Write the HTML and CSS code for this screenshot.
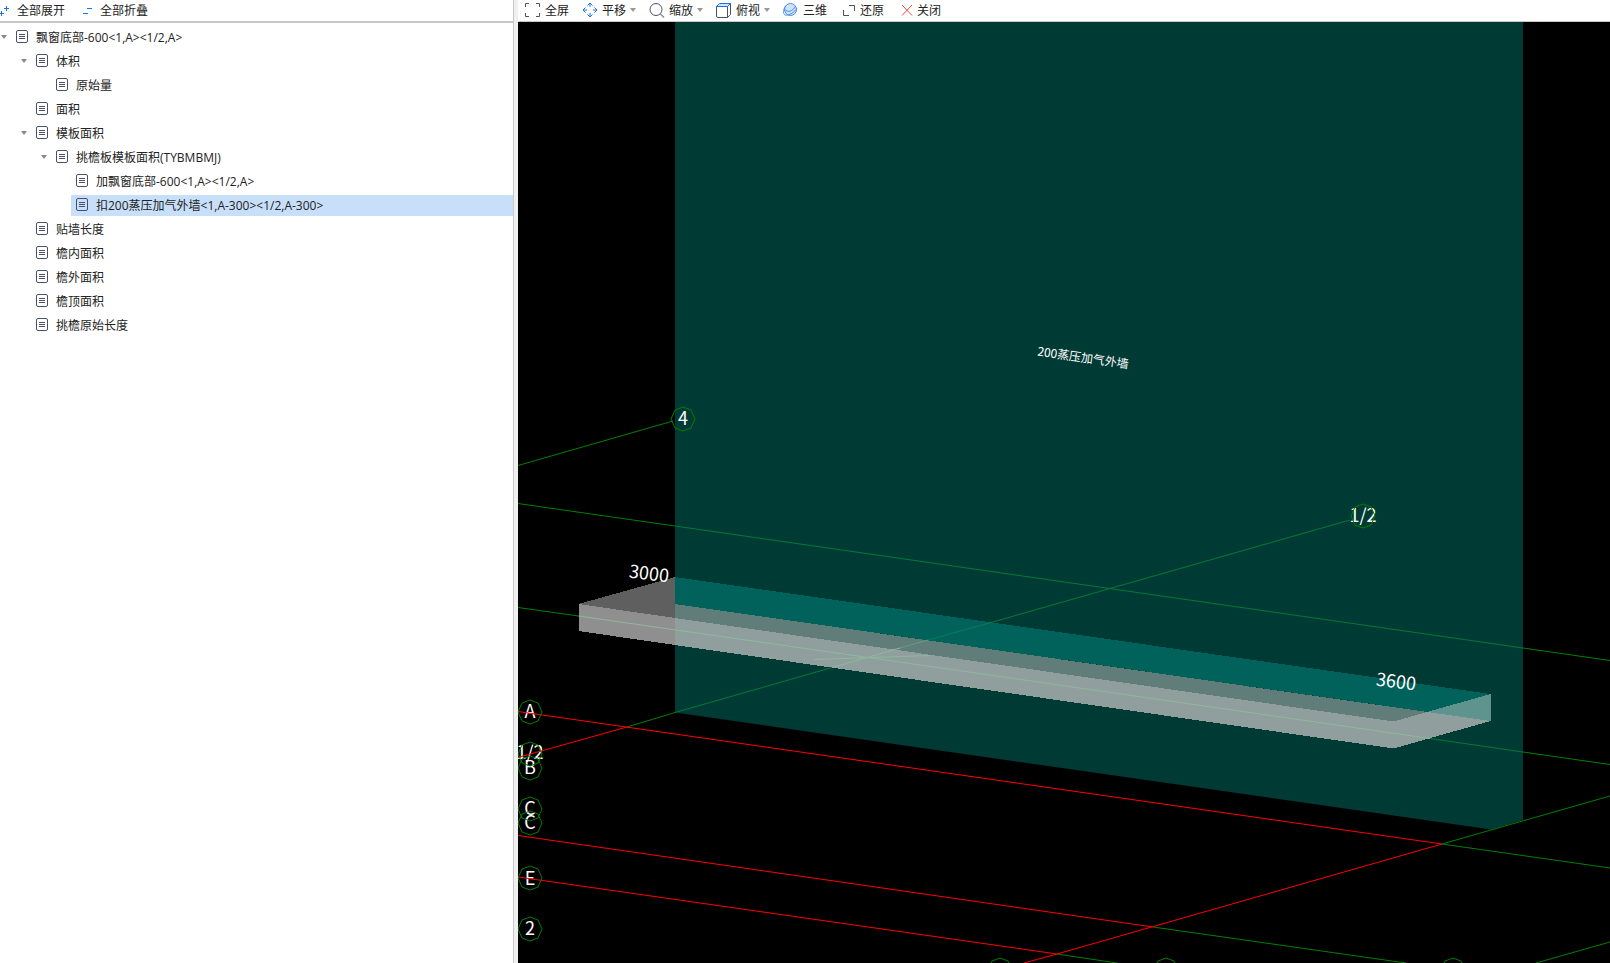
FILE: index.html
```html
<!DOCTYPE html>
<html lang="zh-CN">
<head>
    <meta charset="UTF-8">
    <meta name="viewport" content="width=device-width, initial-scale=1.0">
    <title>三维扣减</title>
    <link rel="stylesheet" href="styles.css">
</head>
<body>
    <!-- shared icons -->
    <svg class="defs" aria-hidden="true">
        <symbol id="doc" viewBox="0 0 12 13">
            <rect x="0.5" y="0.5" width="11" height="12" rx="1.5" fill="none" stroke="#4a5068"/>
            <path d="M3 4.5h6M3 6.5h6M3 8.5h6" fill="none" stroke="#4a5068"/>
        </symbol>
        <symbol id="bubble" viewBox="-13 -13 26 26">
            <path d="M0-12L8-9L12 0L8 9L0 12L-8 9L-12 0L-8-9Z" fill="none" stroke="#008000"/>
        </symbol>
    </svg>

    <div class="app">
        <aside class="side">
            <div class="toolbar side-bar">
                <button type="button">
                    <svg width="10" height="16" viewBox="0 0 10 16"><path d="M0 11.500h4M1.500 9v5M4 6.500h5M6.500 4v5" fill="none" stroke="#1a73e8"/></svg>
                    全部展开
                </button>
                <button type="button">
                    <svg width="10" height="16" viewBox="0 0 10 16"><path d="M0 11.500h5M4 6.500h5" fill="none" stroke="#1a73e8"/></svg>
                    全部折叠
                </button>
            </div>
            <ul class="tree">
                <li>
                    <div class="row"><button type="button" class="toggle" aria-label="折叠"></button><span class="node"><svg class="doc"><use href="#doc"/></svg>飘窗底部-600&lt;1,A&gt;&lt;1/2,A&gt;</span></div>
                    <ul>
                        <li>
                            <div class="row"><button type="button" class="toggle" aria-label="折叠"></button><span class="node"><svg class="doc"><use href="#doc"/></svg>体积</span></div>
                            <ul>
                                <li><div class="row"><span class="node"><svg class="doc"><use href="#doc"/></svg>原始量</span></div></li>
                            </ul>
                        </li>
                        <li><div class="row"><span class="node"><svg class="doc"><use href="#doc"/></svg>面积</span></div></li>
                        <li>
                            <div class="row"><button type="button" class="toggle" aria-label="折叠"></button><span class="node"><svg class="doc"><use href="#doc"/></svg>模板面积</span></div>
                            <ul>
                                <li>
                                    <div class="row"><button type="button" class="toggle" aria-label="折叠"></button><span class="node"><svg class="doc"><use href="#doc"/></svg>挑檐板模板面积(TYBMBMJ)</span></div>
                                    <ul>
                                        <li><div class="row"><span class="node"><svg class="doc"><use href="#doc"/></svg>加飘窗底部-600&lt;1,A&gt;&lt;1/2,A&gt;</span></div></li>
                                        <li><div class="row"><span class="node selected"><svg class="doc"><use href="#doc"/></svg>扣200蒸压加气外墙&lt;1,A-300&gt;&lt;1/2,A-300&gt;</span></div></li>
                                    </ul>
                                </li>
                            </ul>
                        </li>
                        <li><div class="row"><span class="node"><svg class="doc"><use href="#doc"/></svg>贴墙长度</span></div></li>
                        <li><div class="row"><span class="node"><svg class="doc"><use href="#doc"/></svg>檐内面积</span></div></li>
                        <li><div class="row"><span class="node"><svg class="doc"><use href="#doc"/></svg>檐外面积</span></div></li>
                        <li><div class="row"><span class="node"><svg class="doc"><use href="#doc"/></svg>檐顶面积</span></div></li>
                        <li><div class="row"><span class="node"><svg class="doc"><use href="#doc"/></svg>挑檐原始长度</span></div></li>
                    </ul>
                </li>
            </ul>
        </aside>

        <main class="view">
            <div class="toolbar view-bar">
                <button type="button">
                    <svg width="16" height="16" viewBox="0 0 16 16"><path d="M0.500 5V1.500H4M11 1.500h3.500V5M14.500 11v3.500H11M4 14.500H0.500V11" fill="none" stroke="#4a5068"/></svg>
                    全屏
                </button>
                <button type="button">
                    <svg width="16" height="16" viewBox="0 0 16 16"><path d="M5.500 3.500L8 1l2.500 2.500M5.500 12.500L8 15l2.500-2.500M3.500 5.500L1 8l2.500 2.500M12.500 5.500L15 8l-2.500 2.500M8 1v4M8 11v4M1 8h4M11 8h4" fill="none" stroke="#1a73e8"/></svg>
                    平移
                    <i class="caret"></i>
                </button>
                <button type="button">
                    <svg width="16" height="16" viewBox="0 0 16 16"><circle cx="7" cy="7.500" r="6" fill="none" stroke="#4a5068"/><path d="M11.500 12l3.500 3.500" stroke="#8a8f9d" stroke-width="1.500"/></svg>
                    缩放
                    <i class="caret"></i>
                </button>
                <button type="button">
                    <svg width="16" height="16" viewBox="0 0 16 16"><path d="M0.500 4.500L3.500 1.500h11l-3 3z" fill="#cfe3fb" stroke="#1a73e8"/><path d="M0.500 4.500v9.500q0 1.500 1.500 1.500h9.500v-11M14.500 1.500v11l-3 3" fill="none" stroke="#4a5068"/></svg>
                    俯视
                    <i class="caret"></i>
                </button>
                <button type="button">
                    <svg width="16" height="16" viewBox="0 0 16 16"><circle cx="7.500" cy="7.500" r="6" fill="#cfe3fb" stroke="#4a8fe8"/><path d="M2.500 4C0 8 0 12 2 13C6 14 12 10 14 6M1.500 7C5 11.500 10 9 12.500 4" fill="none" stroke="#4a8fe8"/></svg>
                    三维
                </button>
                <button type="button">
                    <svg width="16" height="16" viewBox="0 0 16 16"><path d="M3.500 8v5.500H9M9 3.500h5.500V9" fill="none" stroke="#4a5068"/></svg>
                    还原
                </button>
                <button type="button">
                    <svg width="16" height="16" viewBox="0 0 16 16"><path d="M5 3l10 10.500M15 3L5 13.500" fill="none" stroke="#f04848"/></svg>
                    关闭
                </button>
            </div>

            <svg class="scene" viewBox="518 22 1092 941" preserveAspectRatio="xMinYMin slice">
                <!-- wall -->
                <path d="M675 22H1523V820L1491 829.500L675 712.500Z" fill="#003a34"/>

                <!-- slab -->
                <g shape-rendering="crispEdges">
                    <path d="M578.500 604L675 577V618Z" fill="#5f5f5f"/>
                    <path d="M578.500 604L675 618V645L578.500 631Z" fill="#8f8f8f"/>
                    <path d="M675 577L1490.500 694V721L675 604Z" fill="#00625b"/>
                    <path d="M675 604L1427 712L1393.500 721.500L675 618Z" fill="#617d7a"/>
                    <path d="M675 618L1393.500 721.500L1427 712L1490.500 721L1393.500 748.500L675 645Z" fill="#909f9d"/>
                    <path d="M1427 712L1490.500 694V721Z" fill="#5f938e"/>
                </g>

                <!-- axis lines -->
                <g class="axis">
                    <path d="M518 465.500L673 421"/>
                    <path d="M518 503.500L675 526M1523 648L1610 660.500"/>
                    <path d="M518 607.500L578.500 616M1523 752L1610 764.500"/>
                    <path d="M627 727L675 712.500"/>
                    <path d="M1442 844L1610 868M1442 844L1610 796"/>
                    <path d="M1153 927L1406 963M1057 954L1117 963M1536 963L1610 942"/>
                </g>
                <g class="axis in-wall">
                    <path d="M675 526L1523 648M1430 738.500L1523 752"/>
                    <path d="M675 712.500L832 667.500M991 622.500L1350 520"/>
                </g>
                <g class="axis in-slab">
                    <path d="M578.500 616L868 657.500L1430 738.500"/>
                    <path d="M832 667.500L900 648M814 659.500L930 655.500"/>
                </g>
                <path class="axis in-floor" d="M900 648L928 640"/>
                <path class="axis in-back" d="M928 640L991 622.500"/>

                <!-- axis numbers -->
                <g class="label">
                    <text x="530" y="718">A</text>
                    <text x="530" y="759">1/2</text>
                    <text x="530" y="774">B</text>
                    <text x="530" y="815">C</text>
                    <text x="530" y="829">C</text>
                    <text x="530" y="885">E</text>
                    <text x="530" y="935">2</text>
                    <text x="683" y="425">4</text>
                    <text x="1363" y="522">1/2</text>
                    <text x="649" y="580" transform="rotate(7 649 574)">3000</text>
                    <text x="1396" y="688" transform="rotate(7 1396 682)">3600</text>
                    <text class="small" x="1083" y="362" transform="rotate(8 1083 358)">200蒸压加气外墙</text>
                </g>
                <g class="axis active">
                    <path d="M518 711.500L1442 844L1057 954L1024 963"/>
                    <path d="M518 757.500L627 727"/>
                    <path d="M518 835.500L1153 927M518 877L1057 954"/>
                </g>
                <use href="#bubble" x="517" y="699" width="26" height="26"/>
                <use href="#bubble" x="517" y="741" width="26" height="26"/>
                <use href="#bubble" x="517" y="755" width="26" height="26"/>
                <use href="#bubble" x="517" y="796" width="26" height="26"/>
                <use href="#bubble" x="517" y="810" width="26" height="26"/>
                <use href="#bubble" x="517" y="865" width="26" height="26"/>
                <use href="#bubble" x="517" y="916" width="26" height="26"/>
                <use href="#bubble" x="670" y="406" width="26" height="26"/>
                <use href="#bubble" x="1350" y="503" width="26" height="26"/>
                <use href="#bubble" x="987" y="957" width="26" height="26"/>
                <use href="#bubble" x="1153" y="957" width="26" height="26"/>
                <use href="#bubble" x="1440" y="957" width="26" height="26"/>
            </svg>
        </main>
    </div>

    <script>
        // collapse / expand one branch of the tree
        document.querySelectorAll('.toggle').forEach(function(btn) {
            btn.onclick = function() {
                btn.closest('li').classList.toggle('closed');
            };
        });
    </script>
</body>
</html>
```

FILE: styles.css
```css
* {
    box-sizing: border-box;
}
body {
    margin: 0;
    font-family: "Open Sans", "Noto Sans CJK SC", sans-serif;
    font-size: 12px;
    color: #222;
    background-color: #fff;
}
button {
    display: flex;
    align-items: center;
    padding: 0;
    border: none;
    background: none;
    font: inherit;
    color: inherit;
    white-space: nowrap;
    cursor: pointer;
}
svg {
    flex-shrink: 0;
}
.defs {
    display: none;
}
.app {
    display: grid;
    grid-template-columns: 518px 1fr;
    height: 100vh;
    overflow: hidden;
}
.side {
    border-right: 4px solid #f0f0f0;
    box-shadow: inset -1px 0 #c8c8c8;
    padding-right: 1px;
    overflow: hidden;
}
.toolbar {
    display: flex;
    height: 22px;
    padding-bottom: 2px;
    border-bottom: 1px solid #c8c8c8;
}
.side-bar {
    gap: 18px;
    height: 23px;
    border-bottom-width: 2px;
}
.side-bar button {
    gap: 7px;
}
.view-bar {
    gap: 13px;
    padding-left: 7px;
}
.view-bar button {
    gap: 4px;
}
.caret, .toggle::before {
    border: 3px solid transparent;
    border-top: 4px solid #999;
    border-bottom: none;
}
.tree {
    padding-top: 4px;
}
.tree, .tree ul {
    margin: 0;
    padding-left: 0;
    list-style: none;
}
.tree ul {
    padding-left: 20px;
}
.closed > ul {
    display: none;
}
.row {
    display: flex;
    height: 21px;
    margin-bottom: 3px;
    padding-left: 11px;
}
.toggle {
    width: 11px;
    margin-left: -11px;
}
.toggle::before {
    content: "";
    margin: 0 0 2px 1px;
    border-top-color: #888;
}
.node {
    display: flex;
    flex: 1;
    align-items: center;
    gap: 8px;
    padding-left: 5px;
    line-height: 21px;
    white-space: nowrap;
}
.selected {
    background-color: #c8dff9;
}
.doc {
    width: 12px;
    height: 13px;
    margin-bottom: 2px;
}
.view {
    display: flex;
    flex-direction: column;
    min-width: 0;
}
.scene {
    flex: 1;
    width: 100%;
    min-height: 0;
    background-color: #000;
}
.axis {
    fill: none;
    stroke: #008000;
}
.in-wall {
    stroke: #007a34;
}
.in-slab {
    stroke: #8fb89c;
}
.in-floor {
    stroke: #62a07e;
}
.in-back {
    stroke: #007f5b;
}
.active {
    stroke: #f00;
}
.label {
    fill: #fff;
    font-family: "Noto Sans CJK SC", sans-serif;
    font-size: 18px;
    text-anchor: middle;
}
.small {
    font-size: 12px;
}
```
